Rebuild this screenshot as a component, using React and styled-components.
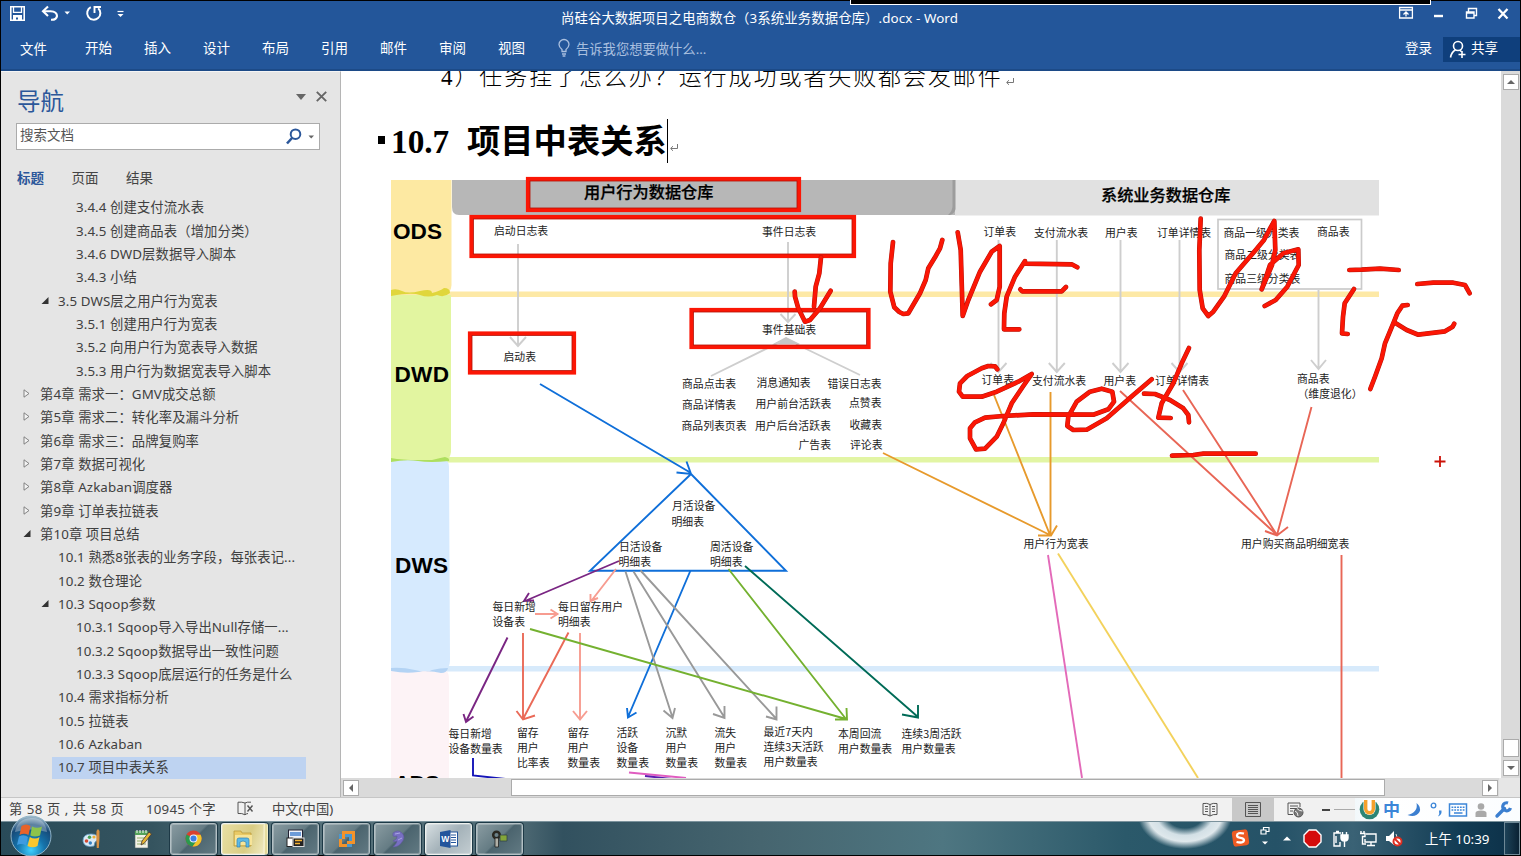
import React from 'react';
import styled, { createGlobalStyle } from 'styled-components';

const UI = `"Noto Sans", "Noto Sans CJK SC", sans-serif`;
const CJK = `"Noto Sans CJK SC", sans-serif`;

const Global = createGlobalStyle`
  * { box-sizing: border-box; }
  body { margin: 0; background: #000; overflow: hidden; font-family: ${UI}; }
  svg { display: block; flex: none; }
`;

const Frame = styled.div`
  position: relative;
  width: 1521px;
  height: 856px;
  padding: 1px;
  background: #000;
  display: flex;
  flex-direction: column;
  overflow: hidden;
`;

/* ---------- title bar and ribbon ---------- */
const Header = styled.header`
  height: 70px;
  flex: none;
  background: #23569a;
  border-bottom: 2px solid #1c4a87;
  color: #fff;
  font-size: 13.5px;
`;
const TitleBar = styled.div`
  height: 35px;
  display: grid;
  grid-template-columns: 200px 1fr 200px;
`;
const QuickTools = styled.div`
  display: flex;
  align-items: flex-start;
  padding: 3px 0 0 8px;
`;
const DocTitle = styled.div`
  text-align: center;
  line-height: 34px;
  white-space: nowrap;
  font-size: 13.4px;
  letter-spacing: 0.08px;
  padding-right: 2px;
`;
const WindowTools = styled.div`
  display: flex;
  justify-content: flex-end;
  padding: 4px 8px 0 0;
`;
const Ribbon = styled.div`
  height: 33px;
  display: flex;
  align-items: flex-start;
`;
const Tabs = styled.nav`
  display: flex;
  padding-left: 19px;
`;
const RibbonTab = styled.span`
  width: ${(p) => p.$w || 59}px;
  line-height: 24px;
  padding-top: ${(p) => (p.$low ? 1 : 0)}px;
`;
const Tell = styled.div`
  flex: 1;
  display: flex;
  gap: 6px;
  color: #a9bfdf;
  line-height: 26px;
  padding-left: 1px;
  font-size: 13.3px;
`;
const SignIn = styled.span`
  line-height: 24px;
  width: 38px;
`;
const Share = styled.div`
  width: 77px;
  height: 25px;
  margin-top: 1px;
  padding-left: 6px;
  display: flex;
  gap: 4px;
  line-height: 23px;
  background: #0f3f7c;
`;
const TopStrip = styled.div`
  position: absolute;
  top: 0;
  left: 850px;
  width: 581px;
  height: 5px;
  background: #000;
  border: 1px solid #fff;
  border-top: 0;
`;

/* ---------- workspace ---------- */
const Body = styled.main`
  height: 726px;
  flex: none;
  display: flex;
`;
const Side = styled.aside`
  width: 340px;
  flex: none;
  background: #e5e5e5;
  border-right: 1px solid #b5b5b5;
  border-top: 1px solid #f5f5f5;
`;
const SideHead = styled.div`
  height: 51px;
  padding: 12px 13px 0 16px;
  display: flex;
  justify-content: space-between;
`;
const SideTitle = styled.h2`
  margin: 0;
  font: 400 23.5px/33px ${CJK};
  color: #2b579a;
`;
const SideTools = styled.div`
  display: flex;
  align-items: center;
  height: 25px;
  gap: 10px;
`;
const Search = styled.div`
  width: 304px;
  height: 27px;
  margin-left: 15px;
  padding: 0 5px 0 3px;
  display: flex;
  align-items: center;
  border: 1px solid #ababab;
  background: #fff;
  color: #555;
  font-size: 13.5px;
`;
const SearchText = styled.span`
  flex: 1;
  line-height: 20px;
  padding-bottom: 3px;
`;
const SideTabs = styled.div`
  display: flex;
  height: 45px;
  padding: 16px 0 0 16px;
  font-size: 13.5px;
  line-height: 24px;
  color: #444;
`;
const SideTab = styled.span`
  width: 54.5px;
  font-weight: ${(p) => (p.$on ? 700 : 400)};
  color: ${(p) => (p.$on ? '#2b579a' : '#444')};
`;
const Item = styled.div`
  display: flex;
  align-items: center;
  height: 23.35px;
  padding-left: ${(p) => 21 + p.$level * 18}px;
  color: #404040;
  font-size: 13.33px;
  letter-spacing: 0.1px;
  white-space: nowrap;
  ${(p) => p.$on && 'background: linear-gradient(#bed3f1, #bed3f1) 51px 2px / 254px 22px no-repeat;'}
`;
const Twist = styled.svg`
  width: 8px;
  height: 9px;
  margin: 0 9px 0 -17px;
`;

const DocPane = styled.section`
  width: 1179px;
  display: flex;
  flex-direction: column;
  background: #fff;
`;
const DocRow = styled.div`
  height: 707px;
  display: flex;
`;
const Paper = styled.article`
  width: 1160px;
  overflow: hidden;
  background: #fff;
`;
const Line = styled.p`
  margin: -9px 0 0;
  height: 31px;
  padding-left: 100px;
  display: flex;
  align-items: center;
  white-space: nowrap;
  font: 300 23px/31px "Liberation Serif", "Noto Sans CJK SC", serif;
  letter-spacing: 1.92px;
  color: #000;
`;
const Heading = styled.h1`
  margin: 0;
  height: 78px;
  padding: 26px 0 0 37px;
  display: flex;
  white-space: nowrap;
  font: 700 33.3px/45px "Liberation Serif", "Noto Sans CJK SC", serif;
  color: #000;
`;
const Bullet = styled.span`
  width: 7px;
  height: 8px;
  margin: 17px 6px 0 0;
  background: #000;
`;
const Num = styled.span`width: 76px;`;
const Caret = styled.span`
  width: 1.5px;
  height: 44px;
  background: #000;
`;
const Mark = styled.svg`
  width: 10px;
  height: 9px;
  margin: ${(p) => p.$m};
`;
const VBar = styled.div`
  width: 19px;
  display: flex;
  flex-direction: column;
  align-items: center;
  background: #dadada;
  padding: 3px 0 2px;
`;
const HBar = styled.div`
  height: 19px;
  display: flex;
  align-items: center;
  padding-left: 2px;
  background: #dadada;
`;
const ScrollBtn = styled.div`
  width: 16px;
  height: 16px;
  border: 1px solid #ababab;
  background: #fff;
  display: grid;
  place-items: center;
`;
const Thumb = styled.div`
  width: ${(p) => p.$w}px;
  height: ${(p) => p.$h}px;
  margin: ${(p) => p.$m};
  border: 1px solid #ababab;
  background: #fff;
`;
const Corner = styled.div`
  width: 21px;
  height: 19px;
  background: #e6e6e6;
  margin-left: auto;
`;
const Diagram = styled.svg`font-family: ${CJK};`;

/* ---------- status bar ---------- */
const Status = styled.footer`
  height: 24px;
  flex: none;
  display: flex;
  align-items: center;
  border-top: 1px solid #c6c6c6;
  background: #f1f1f1;
  color: #444;
  font-size: 13.3px;
  padding-left: 8px;
  white-space: nowrap;
`;
const Stat = styled.span`
  width: ${(p) => p.$w}px;
  padding-bottom: 3px;
  letter-spacing: ${(p) => p.$ls || 0}px;
`;
const ViewCell = styled.span`
  width: 42.5px;
  height: 23px;
  display: grid;
  place-items: center;
  background: ${(p) => (p.$on ? '#c8c8c8' : 'transparent')};
`;
const Zoomer = styled.span`
  display: flex;
  align-items: center;
  flex: 1;
  padding-left: 5px;
  gap: 4px;
`;
const Minus = styled.i`width: 8px; height: 2px; background: #444;`;
const Rail = styled.i`flex: 1; height: 1px; background: #aaa;`;
const Ime = styled.div`
  width: 165px;
  height: 23px;
  padding-left: 4px;
  display: flex;
  align-items: center;
  background: linear-gradient(90deg, #f2f8fb, #fff 20%, #fbfdff);
  color: #3c86d8;
`;
const ImeWord = styled.b`
  font-size: 17px;
  line-height: 22px;
  width: 24px;
  padding-left: 3px;
`;

/* ---------- taskbar ---------- */
const Taskbar = styled.div`
  position: relative;
  height: 34px;
  flex: none;
  display: flex;
  align-items: center;
  border-top: 1px solid #7b929c;
  background:
    radial-gradient(ellipse 47px 34px at 1184px -7px, transparent 38%, #d3e0e6 60%, #dfe8ec 78%, transparent 100%),
    linear-gradient(90deg, #294b59 0, #35545f 10%, #56717a 17%, #506b75 34%, #32515f 37%, #46656f 50%, #4e7681 62%, #2b596a 74%, #255267 84%, #3a6275 89%, #123c54 96%, #0c3048 100%);
`;
const Orb = styled.div`
  position: absolute;
  left: 9px;
  top: -7px;
  width: 42px;
  height: 42px;
`;
const Pinned = styled.div`
  display: flex;
  width: 169px;
  padding-left: 81px;
  gap: 31px;
`;
const Task = styled.div`
  width: 47px;
  height: 32px;
  margin-right: 4px;
  display: grid;
  place-items: center;
  border: 1px solid ${(p) => (p.$kind === 'plain' ? '#b3c0c4' : '#eef1ee')};
  border-radius: 3px;
  box-shadow: inset 0 0 0 1px rgba(255,255,255,.25), 0 0 0 1px #1d3946;
  background: ${(p) =>
    p.$kind === 'folder'
      ? 'linear-gradient(110deg, #e8dfa4, #d9cd84 60%, #f0eac2)'
      : p.$kind === 'active'
      ? 'linear-gradient(135deg, #d7dfe2, #a4b2b9 50%, #c3cdd1)'
      : 'linear-gradient(135deg, #8a9ca2 0, #657c84 48%, #4b646e 52%, #627a83 100%)'};
  ${(p) => p.$kind === 'folder' && 'border-right: 4px double #f5efc5;'}
`;
const Tray = styled.div`
  margin-left: auto;
  display: flex;
  align-items: center;
  color: #fff;
`;
const TrayIcon = styled.span`
  width: ${(p) => p.$w}px;
  display: grid;
  place-items: center;
`;
const Clock = styled.span`
  width: 98px;
  padding-left: 19px;
  font-size: 13.4px;
  line-height: 30px;
  white-space: nowrap;
`;
const Peek = styled.span`
  width: 16px;
  height: 33px;
  border: 1px solid #6e8896;
  background: linear-gradient(90deg, #1d4258, #0a2234);
`;

const toc = [
  [3, '3.4.4 创建支付流水表'],
  [3, '3.4.5 创建商品表（增加分类）'],
  [3, '3.4.6 DWD层数据导入脚本'],
  [3, '3.4.3 小结'],
  [2, '3.5 DWS层之用户行为宽表', 'open'],
  [3, '3.5.1 创建用户行为宽表'],
  [3, '3.5.2 向用户行为宽表导入数据'],
  [3, '3.5.3 用户行为数据宽表导入脚本'],
  [1, '第4章 需求一：GMV成交总额', 'shut'],
  [1, '第5章 需求二：转化率及漏斗分析', 'shut'],
  [1, '第6章 需求三：品牌复购率', 'shut'],
  [1, '第7章 数据可视化', 'shut'],
  [1, '第8章 Azkaban调度器', 'shut'],
  [1, '第9章 订单表拉链表', 'shut'],
  [1, '第10章 项目总结', 'open'],
  [2, '10.1 熟悉8张表的业务字段，每张表记...'],
  [2, '10.2 数仓理论'],
  [2, '10.3 Sqoop参数', 'open'],
  [3, '10.3.1 Sqoop导入导出Null存储一...'],
  [3, '10.3.2 Sqoop数据导出一致性问题'],
  [3, '10.3.3 Sqoop底层运行的任务是什么'],
  [2, '10.4 需求指标分析'],
  [2, '10.5 拉链表'],
  [2, '10.6 Azkaban'],
  [2, '10.7 项目中表关系'],
];

const labels = [
  [494, 231, '启动日志表'], [762, 232, '事件日志表'], [762, 330, '事件基础表'], [503.5, 357, '启动表'],
  [682, 384, '商品点击表'], [756.5, 382.5, '消息通知表'], [827.5, 383.5, '错误日志表'],
  [682, 405, '商品详情表'], [755.5, 404, '用户前台活跃表'], [849, 403, '点赞表'],
  [681.5, 426, '商品列表页表'], [755, 426, '用户后台活跃表'], [849.5, 424.5, '收藏表'],
  [798.5, 444.5, '广告表'], [850, 444.5, '评论表'],
  [983.5, 232, '订单表'], [1034, 232.5, '支付流水表'], [1105, 232.5, '用户表'], [1157, 232.5, '订单详情表'],
  [1223.5, 232.5, '商品一级分类表'], [1317, 232, '商品表'], [1224.5, 255, '商品二级分类表'], [1224.5, 278.5, '商品三级分类表'],
  [981.5, 380, '订单表'], [1032, 380.5, '支付流水表'], [1103.5, 380.5, '用户表'], [1155, 380.5, '订单详情表'],
  [1297, 378.5, '商品表'], [1297.5, 393.5, '（维度退化）'],
  [672, 506, '月活设备'], [671.5, 521.5, '明细表'], [619, 547, '日活设备'], [618.5, 562, '明细表'],
  [710, 547, '周活设备'], [710, 562, '明细表'],
  [492.5, 606.5, '每日新增'], [492.5, 622, '设备表'], [558, 606.5, '每日留存用户'], [558, 621.5, '明细表'],
  [448.5, 733.5, '每日新增'], [448.5, 748.5, '设备数量表'],
  [517, 732.5, '留存'], [517, 747.5, '用户'], [517, 763, '比率表'],
  [567.5, 732.5, '留存'], [567.5, 747.5, '用户'], [567.5, 763, '数量表'],
  [616.5, 732.5, '活跃'], [616.5, 747.5, '设备'], [616.5, 763, '数量表'],
  [665.5, 732.5, '沉默'], [665.5, 747.5, '用户'], [665.5, 763, '数量表'],
  [714.5, 732.5, '流失'], [714.5, 747.5, '用户'], [714.5, 763, '数量表'],
  [763.5, 731.5, '最近7天内'], [763.5, 747, '连续3天活跃'], [763.5, 762, '用户数量表'],
  [838, 733.5, '本周回流'], [838, 748.5, '用户数量表'],
  [901.5, 733.5, '连续3周活跃'], [901.5, 748.5, '用户数量表'],
  [1023.5, 544, '用户行为宽表'], [1241, 544, '用户购买商品明细宽表'],
];

const down = (x, a, b, w = 8, h = 9) => `M${x} ${a}V${b}M${x - w} ${b - h}L${x} ${b}L${x + w} ${b - h}`;
const lines = [
  ['#cecece', down(518, 244, 346)],
  ['#cecece', down(788, 242, 322, 7.5, 8)],
  ['#cecece', 'M711 376L780 342M860 375L796 344'],
  ['#cecece', down(998.5, 240, 372)], ['#cecece', down(1056.8, 240, 372)],
  ['#cecece', down(1120.5, 240, 372)], ['#cecece', down(1179.5, 240, 372)],
  ['#cecece', down(1318.5, 290, 369, 7.5)],
  ['#0f6fd9', 'M540 384L691 473M686.5 461.5L691 474L676.5 472.5M691 474L590 570.8H786L691 474'],
  ['#f79c90', 'M616 569L592 600M590.5 594V601L598 598M535 614H557M550.5 609.5L557.5 614L550.5 618.5'],
  ['#7a2683', 'M619 561L525 601M529 593L524 601L534 600.5M507.5 637.5L466 721.5M463.5 714L466 722L473.5 716.5'],
  ['#ea6a58', 'M523 633V719M568.5 632.5L523 719M516.5 711L523 719.5L535 715.5'],
  ['#f79c90', 'M580 633V719M573 711L580 719.5L587 711'],
  ['#0f6fd9', 'M690.5 570.5L628 717M627 708L628 717.5L636.5 712.5'],
  ['#999', 'M625.5 571.5L672.5 717.5M663.5 710.5L672.5 718L675 708M633.5 571.5L724.5 717.5M713 714L724.5 718V706M640.5 570.5L776.5 719M766 716.5L776.5 719.5V706.5'],
  ['#74b130', 'M530 629L846 719M728.5 569L846 719M835 719.5H847L846.5 708'],
  ['#006b57', 'M745 566L918 717M902 714.5L918 717.5V705'],
  ['#e79a2c', 'M883 453L1050 535M994 395L1050 535M1050.5 392V535M1038 535.5H1051L1057 525.5'],
  ['#e36ab9', 'M1048 555L1082 778'],
  ['#f3d25c', 'M1058 553.5L1198 778'],
  ['#e86656', 'M1120 391L1277 535M1183 390L1277 535M1311.5 407L1277 535M1265 531L1277 535.5L1288 527M1341.5 555V778'],
  ['#1515b8', 'M473 758V775.5L506 779'],
  ['#e05cc0', 'M629 772.5L686 778'],
  ['#5a1cb0', 'M645 776L672 779'],
];

const inks = [
  [860, '99,216 92,280 91,365 103,412 118,426 130,432 145,430 180,370 197,330 205,295 225,262 240,235 247,210'],
  [860, '293,187 302,240 308,438 325,390 360,305 395,245 419,228 419,350 410,390 393,403'],
  [860, '652,292 635,283 495,281 495,273 465,320 440,380 433,430 432,478 478,478'],
  [860, '481,358 487,364 605,364 618,351'],
  [860, '1022,146 1018,240 1019,360 1028,415 1045,438 1060,425 1092,380 1127,310 1187,240 1212,210 1232,172 1243,153 1246,240 1236,285 1205,358 1215,330 1230,285 1270,250 1315,238 1316,285 1282,350 1247,390 1214,408'],
  [1180, '508,300 545,299 600,296 656,300'],
  [1180, '522,357 494,400 489,440 486,490 503,492'],
  [1180, '712,342 760,338 820,338 855,345 869,370'],
  [1180, '683,405 667,407 652,430 640,460 615,520 605,565 585,620 571,657'],
  [1180, '645,458 680,480 715,494 795,484 818,470 823,461'],
  [860, '412,598 405,589 385,588 365,595 322,618 300,640 297,665 308,680 365,680 410,665 475,635 515,612 490,648 455,700 430,760 410,800 375,836 348,838 330,805 330,775 345,757 375,743 430,738 520,733 700,734 745,718 762,695 757,665 725,656 690,665 650,695 625,740 622,768 640,780 680,779 740,745 820,675 875,628'],
  [860, '987,534 965,580 940,640 905,700 895,743 932,744'],
  [860, '852,671 885,672 930,690 970,715 985,735 987,757'],
  [860, '936,857 1000,855 1030,851 1187,851'],
  [380, '1323,262 1318,310 1307,350 1302,410'],
  [380, '1244,365 1245,380 1255,415 1275,455 1290,450 1320,415 1352,362'],
].map(([ox, s]) => s.split(' ').map((p) => {
  const [x, y] = p.split(',').map(Number);
  return `${(ox + x / 3).toFixed(1)},${(170 + y / 3).toFixed(1)}`;
}).join(' '));

const frames = [[526, 177, 275, 35], [469.5, 215, 386.5, 43], [468, 331.5, 108, 43], [689.5, 308, 181, 41]];

function Warehouse() {
  return (
    <Diagram width="1160" height="607" viewBox="341 171 1160 607">
      <path fill="#b7b7b7" d="M452 180H955V215H459Q452 215 452 207Z" />
      <path fill="#e1e1e1" d="M955 180H1379V215.5H955Z" />
      <path fill="#9c9c9c" d="M952.5 180H955.5V209Q955 213 950 215H948Q952.5 211 952.5 206Z" />
      <path fill="#fde9a6" d="M391 291.5H1379V297H391Z" />
      <path fill="#e2f5a4" d="M391 457H1379V462.5H391Z" />
      <path fill="#d7eafb" d="M391 666H1379V671.5H391Z" />
      <path fill="#fde9a2" d="M391 180H451.5V285Q451 292 447 293H391Z" />
      <path fill="#e2f5a0" d="M391 295H451V452Q450 459 446 460H391Z" />
      <path fill="#d6eafe" d="M391 460H445Q449 461 449 467L450 660Q450 669 443 671H391Z" />
      <path fill="#fdf3f6" d="M391 671H446Q449 672 449 680V778H391Z" />
      <path fill="#e0d63c" d="M391 290Q396 288 402 291T420 291T432 293Q440 291 444 288Q450 288 450 293Q444 298 437 295Q428 298 420 295T391 296Z" />
      <path fill="#aedf5e" d="M391 458Q402 460 418 460T432 460Q440 458 445 457Q450 458 449 461Q430 463 418 461T391 462Z" />
      <path fill="#b3d3f4" d="M391 668Q402 667 415 670T432 670Q440 668 448 668Q447 673 441 673Q430 670 418 672T391 671Z" />
      <g fontFamily="Liberation Sans, sans-serif" fontWeight="700" fontSize="22.6" fill="#000">
        <text x="393" y="239" textLength="49">ODS</text>
        <text x="394.5" y="382" textLength="54.5">DWD</text>
        <text x="395" y="573" textLength="53">DWS</text>
        <text x="394" y="790.5" textLength="46">ADS</text>
      </g>
      <g fontWeight="500" fontSize="16.2" fill="#000" stroke="#000" strokeWidth=".25">
        <text x="584" y="198">用户行为数据仓库</text>
        <text x="1101" y="200.5">系统业务数据仓库</text>
      </g>
      <rect x="1218" y="219.5" width="143.5" height="69.5" fill="none" stroke="#cbcbcb" strokeWidth="1.7" />
      <path d="M786 337L773 344H800Z" fill="#c6c6c6" />
      {lines.map(([c, d], i) => <path key={i} d={d} stroke={c} strokeWidth="1.9" fill="none" />)}
      <g fontSize="10.83" fill="#222">
        {labels.map(([x, y, t], i) => <text key={i} x={x} y={y + 4}>{t}</text>)}
      </g>
      <g fill="none" stroke="#fb1605" strokeWidth="4.2">
        {frames.map(([x, y, w, h], i) => <rect key={i} x={x + 2} y={y + 2} width={w - 4} height={h - 4} />)}
      </g>
      <g fill="none" stroke="#a81208" strokeWidth="0.7">
        {frames.map(([x, y, w, h], i) => <rect key={i} x={x + 4} y={y + 4} width={w - 8} height={h - 8} />)}
      </g>
      <g fill="none" strokeLinejoin="round" strokeLinecap="round">
        {inks.map((p, i) => <polyline key={i} points={p} stroke="#b5150a" strokeWidth="4.7" />)}
        {inks.map((p, i) => <polyline key={i} points={p} stroke="#fb1605" strokeWidth="3.7" />)}
      </g>
      <path d="M1434.5 461.5H1445.5M1440 456V467" stroke="#cc1208" strokeWidth="1.8" />
    </Diagram>
  );
}

const Return = ({ m }) => (
  <Mark $m={m} viewBox="0 0 10 9"><path d="M8.5 1V5.5H2M4 3.2L1.6 5.5L4 7.8" fill="none" stroke="#777" /></Mark>
);
const Arrow = ({ d }) => <svg width="8" height="8" viewBox="0 0 8 8"><path d={d} fill="#666" /></svg>;

const QuickIcons = () => (
  <svg width="120" height="20" viewBox="0 0 120 20" fill="none" stroke="#fff">
    <path d="M1.8 2.8H15.2V16.2H1.8Z" strokeWidth="1.6" />
    <path d="M4.5 3V8.3H12.5V3" strokeWidth="1.3" />
    <path d="M4 11H13V16.5H9V13.5H7V16.5H4Z" fill="#fff" stroke="none" />
    <path d="M34.5 7.2H41.5Q48 7.5 48 12Q47.5 16 42 15.8" strokeWidth="2.1" />
    <path d="M39 2.4L34 7.2L39 12" strokeWidth="2.1" />
    <path d="M55.5 7.5H61L58.2 10.5Z" fill="#fff" stroke="none" />
    <path d="M81.8 3.2A6.6 6.6 0 1 0 89.2 4.2" strokeWidth="2" />
    <path d="M85.5 9V3H92" strokeWidth="1.9" />
    <path d="M108.5 7.5H114.5" strokeWidth="1.2" />
    <path d="M108.5 10H114.5L111.5 13Z" fill="#fff" stroke="none" />
  </svg>
);
const WindowIcons = () => (
  <svg width="115" height="20" viewBox="0 0 115 20" fill="none" stroke="#fff">
    <path d="M2.6 2.5H15.4V13H2.6ZM2.6 5H15.4M9 11.5V7.5M6.5 9.5L9 7L11.5 9.5" strokeWidth="1.3" />
    <path d="M37 11H46" strokeWidth="2.4" />
    <path d="M69.5 7H77V13H69.5ZM71.5 7V3.5H79.5V10.5H77M69.5 8H77" strokeWidth="1.4" />
    <path d="M101.5 4L110.5 13.5M110.5 4L101.5 13.5" strokeWidth="2.3" />
  </svg>
);

export default function App() {
  return (
    <Frame>
      <Global />
      <Header>
        <TitleBar>
          <QuickTools><QuickIcons /></QuickTools>
          <DocTitle>尚硅谷大数据项目之电商数仓（3系统业务数据仓库）.docx - Word</DocTitle>
          <WindowTools><WindowIcons /></WindowTools>
        </TitleBar>
        <Ribbon>
          <Tabs>
            <RibbonTab $w={65} $low>文件</RibbonTab>
            {['开始', '插入', '设计', '布局', '引用', '邮件', '审阅', '视图'].map((t) => <RibbonTab key={t}>{t}</RibbonTab>)}
          </Tabs>
          <Tell>
            <svg width="12" height="24" viewBox="0 0 12 24" fill="none" stroke="#a9bfdf" strokeWidth="1.3">
              <path d="M4 15.5V13.5Q1 11 1 8.5A5 5 0 0 1 11 8.5Q11 11 8 13.5V15.5ZM4 18H8M4.6 20H7.4" />
            </svg>
            告诉我您想要做什么...
          </Tell>
          <SignIn>登录</SignIn>
          <Share>
            <svg width="18" height="25" viewBox="0 0 18 25" fill="none" stroke="#fff" strokeWidth="1.6">
              <circle cx="9" cy="9" r="4.5" /><path d="M1.5 20.5Q2.5 15 6.5 13M11 13L12 14.5M9.5 17.5H16.5M13 14V21" />
            </svg>
            共享
          </Share>
        </Ribbon>
      </Header>
      <TopStrip />

      <Body>
        <Side>
          <SideHead>
            <SideTitle>导航</SideTitle>
            <SideTools>
              <svg width="10" height="6" viewBox="0 0 10 6"><path d="M0 0H10L5 6Z" fill="#666" /></svg>
              <svg width="11" height="11" viewBox="0 0 11 11"><path d="M.8.8L10.2 10.2M10.2.8L.8 10.2" stroke="#666" strokeWidth="1.9" /></svg>
            </SideTools>
          </SideHead>
          <Search>
            <SearchText>搜索文档</SearchText>
            <svg width="28" height="18" viewBox="0 0 28 18">
              <circle cx="9.5" cy="6.2" r="4.8" fill="none" stroke="#2b579a" strokeWidth="2" />
              <path d="M6 10L1 15.5" stroke="#2b579a" strokeWidth="2.6" />
              <path d="M22.5 7.5H28L25.2 10.5Z" fill="#666" />
            </svg>
          </Search>
          <SideTabs>
            <SideTab $on>标题</SideTab><SideTab>页面</SideTab><SideTab>结果</SideTab>
          </SideTabs>
          {toc.map(([level, text, twist]) => (
            <Item key={text} $level={level} $on={text.startsWith('10.7')}>
              {twist && (
                <Twist viewBox="0 0 8 9">
                  {twist === 'open'
                    ? <path d="M7.5 1V8H.5Z" fill="#333" />
                    : <path d="M1 .8L6 4.5L1 8.2Z" fill="#f4f4f4" stroke="#777" strokeWidth=".9" />}
                </Twist>
              )}
              {text}
            </Item>
          ))}
        </Side>

        <DocPane>
          <DocRow>
            <Paper>
              <Line>4）任务挂了怎么办？运行成功或者失败都会发邮件<Return m="7px 0 0 2px" /></Line>
              <Heading>
                <Bullet /><Num>10.7</Num>项目中表关系<Caret /><Return m="24px 0 0 1px" />
              </Heading>
              <Warehouse />
            </Paper>
            <VBar>
              <ScrollBtn><Arrow d="M0 6H8L4 2Z" /></ScrollBtn>
              <Thumb $w={16} $h={18} $m="auto 0 3px" />
              <ScrollBtn><Arrow d="M0 2H8L4 6Z" /></ScrollBtn>
            </VBar>
          </DocRow>
          <HBar>
            <ScrollBtn><Arrow d="M6 0V8L2 4Z" /></ScrollBtn>
            <Thumb $w={874} $h={17} $m="0 97px 0 152px" />
            <ScrollBtn><Arrow d="M2 0V8L6 4Z" /></ScrollBtn>
            <Corner />
          </HBar>
        </DocPane>
      </Body>

      <Status>
        <Stat $w={137} $ls={0.5}>第 58 页 , 共 58 页</Stat>
        <Stat $w={91} $ls={0.2}>10945 个字</Stat>
        <Stat $w={35}>
          <svg width="18" height="15" viewBox="0 0 18 15" fill="none" stroke="#555">
            <path d="M8 2Q5 .8 1 1.2V12.5Q5 12 8 13.8ZM8 2Q10 .8 14 1.2M8 13.8Q9 12.8 11 12.5" />
            <path d="M10.5 4.5L15.5 10.5M15.5 4.5L10.5 10.5" strokeWidth="1.4" />
          </svg>
        </Stat>
        <Stat $w={917}>中文(中国)</Stat>
        <ViewCell>
          <svg width="16" height="15" viewBox="0 0 16 15" fill="none" stroke="#555">
            <path d="M8 2.5Q5 .8 1 1.5V12.5Q5 12 8 14Q11 12 15 12.5V1.5Q11 .8 8 2.5V14M3 4.5H6M3 7H6M3 9.5H6M10 4.5H13M10 7H13M10 9.5H13" />
          </svg>
        </ViewCell>
        <ViewCell $on>
          <svg width="16" height="15" viewBox="0 0 16 15" fill="none" stroke="#555">
            <path d="M.5.5H15.5V14.5H.5ZM3 3.5H13M3 5.5H13M3 7.5H13M3 9.5H13M3 11.5H13" />
          </svg>
        </ViewCell>
        <ViewCell>
          <svg width="17" height="16" viewBox="0 0 17 16" fill="none" stroke="#555">
            <path d="M6 12.5H1V1H13V5M3 4H11M3 6.5H9M3 9H6" />
            <circle cx="11.5" cy="10.5" r="4.5" fill="#777" /><path d="M8 9Q11 10 11 14M10 6.5Q12 9 15.5 9" stroke="#eee" />
          </svg>
        </ViewCell>
        <Zoomer><Minus /><Rail /></Zoomer>
        <Ime>
          <svg width="21" height="21" viewBox="0 0 21 21">
            <circle cx="10.5" cy="10.5" r="9.8" fill="#2d8574" />
            <path d="M4.5 0V10A6 6 0 0 0 16.5 10V0Z" fill="#fff" />
            <path d="M6.7 1V10A3.8 3.8 0 0 0 14.3 10V1" fill="none" stroke="#f5a12c" strokeWidth="3.4" />
          </svg>
          <ImeWord>中</ImeWord>
          <svg width="109" height="20" viewBox="1404.5 0 109 20">
            <path d="M1417 3Q1422 7 1420 12Q1416 18 1408 15Q1419 12 1417 3Z" fill="#3c7fd0" />
            <circle cx="1434" cy="5.5" r="2.3" fill="none" stroke="#3c86d8" strokeWidth="1.3" />
            <path d="M1439.5 10.5H1442Q1442.5 15 1438.5 16.5Q1440.5 14 1439.5 10.5Z" fill="#3c86d8" />
            <rect x="1450" y="4" width="17" height="12" fill="#fff" stroke="#3c86d8" strokeWidth="1.5" />
            <path d="M1452 7.2H1465.5M1452 10H1465.5" stroke="#3c86d8" strokeWidth="1.5" strokeDasharray="1.8 1" /><path d="M1454.5 13H1463" stroke="#3c86d8" strokeWidth="1.5" />
            <circle cx="1481.5" cy="6.5" r="3.3" fill="#a9a9a9" /><path d="M1476 17V13Q1476 10.5 1481.5 10.5T1487 13V17Z" fill="#a9a9a9" />
            <path d="M1497.5 16L1505 8.5" stroke="#3c7fd0" strokeWidth="3.4" strokeLinecap="round" /><path d="M1508.5 3A4 4 0 1 0 1511 8" fill="none" stroke="#3c7fd0" strokeWidth="3.2" />
          </svg>
        </Ime>
      </Status>

      <Taskbar>
        <Orb>
          <svg width="42" height="42" viewBox="0 0 42 42">
            <defs>
              <radialGradient id="orb" cx=".5" cy=".85" r=".85">
                <stop offset="0" stopColor="#3fd0ff" /><stop offset=".4" stopColor="#1573ab" /><stop offset=".75" stopColor="#174a78" /><stop offset="1" stopColor="#a9c3d2" />
              </radialGradient>
            </defs>
            <circle cx="21" cy="21" r="20" fill="url(#orb)" stroke="#8fb2c6" />
            <path d="M5 17Q7 4 21 3T37 17Q21 12 5 17Z" fill="#fff" opacity=".3" />
            <path d="M11.5 11Q16 8 20.5 11L18.5 20Q14 17.5 9.5 20Z" fill="#e8632a" />
            <path d="M22 11.5Q27 14 32 11.5L30 20.5Q25 22.5 20.3 20.5Z" fill="#8dc44a" />
            <path d="M9 21.5Q14 19 18 22L16 30.5Q11.5 28 7 30Z" fill="#3e9be0" />
            <path d="M19.8 22Q25 25 29.5 22L27.5 31Q23 33.5 17.5 31Z" fill="#fac72e" />
          </svg>
        </Orb>
        <Pinned>
          <svg width="20" height="20" viewBox="0 0 20 20">
            <path d="M1 12Q1 5 9 5T16 11Q12 12 12 17Q2 19 1 12Z" fill="#dceaf5" stroke="#6ba3cc" strokeWidth=".8" />
            <circle cx="4.5" cy="12" r="1.8" fill="#d44a32" /><circle cx="7.5" cy="8.3" r="1.7" fill="#45a055" /><circle cx="12" cy="8" r="1.6" fill="#eead34" /><circle cx="8.3" cy="14" r="1.7" fill="#347fc2" />
            <path d="M14.5 2L16 0L17.5 2V9L16.8 19H14.8L14.3 9Z" fill="#da9143" />
          </svg>
          <svg width="20" height="20" viewBox="0 0 20 20">
            <path d="M2 2H15V19H2Z" fill="#f4f3e8" stroke="#566" strokeWidth=".6" /><path d="M2 2H15V6H2Z" fill="#55a35a" />
            <path d="M4 1V4M7 1V4M10 1V4M13 1V4" stroke="#fff" /><path d="M4 9H12M4 12H10M4 15H13" stroke="#93ae69" />
            <path d="M8 16L9 12L16 3L18.5 5L11.5 14Z" fill="#e5b533" stroke="#433" strokeWidth=".8" />
          </svg>
        </Pinned>
        <Task $kind="plain">
          <svg width="17" height="17" viewBox="0 0 18 18">
            <circle cx="9" cy="9" r="8.5" fill="#d9402f" /><path d="M9 9L1.7 4.8A8.5 8.5 0 0 0 8 17.5L13 11Z" fill="#2b9a4d" /><path d="M9 5H16.5A8.5 8.5 0 0 1 8 17.5L12.5 11Z" fill="#f2c52b" /><circle cx="9" cy="9" r="4.2" fill="#eef" /><circle cx="9" cy="9" r="3.2" fill="#3c7fe4" />
          </svg>
        </Task>
        <Task $kind="folder">
          <svg width="20" height="19" viewBox="0 0 20 19">
            <path d="M1 2H8L9 4H18V17H1Z" fill="#e9ca66" stroke="#b79635" strokeWidth=".7" /><path d="M2 6H19V16H2Z" fill="#f7e498" /><path d="M4 18V11Q4 9 6 9H14Q16 9 16 11V18H13V13Q10 11 7 13V18Z" fill="#5cb9e6" stroke="#2f83b4" strokeWidth=".7" />
          </svg>
        </Task>
        <Task $kind="plain">
          <svg width="19" height="19" viewBox="0 0 19 19">
            <rect x="2.5" y="1" width="14" height="11" fill="#eef2fa" stroke="#223" /><path d="M4 3H15V7H4Z" fill="#6c9bd8" /><rect x="1" y="9" width="6" height="8.5" fill="#fff" stroke="#222" /><rect x="7" y="9" width="11" height="8.5" fill="#222" stroke="#ddd" /><path d="M9 11.5H16M9 14.5H14" stroke="#f5b434" strokeWidth="1.6" />
          </svg>
        </Task>
        <Task $kind="plain">
          <svg width="18" height="18" viewBox="0 0 18 18" fill="none">
            <rect x="2.5" y="5.5" width="10" height="10" stroke="#4a97cf" strokeWidth="3" />
            <path d="M5.5 9V2.5H15.5V12.5H9" stroke="#f3932b" strokeWidth="3" />
            <path d="M2.5 9V15.5H9" stroke="#f3932b" strokeWidth="3" />
          </svg>
        </Task>
        <Task $kind="plain">
          <svg width="18" height="20" viewBox="0 0 18 20">
            <path d="M4 4Q9 0 13 4Q17 8 13 13Q10 18 4 18Q8 14 8 12Q6 13 4 12Q9 10 8 7Q6 8 4 7Z" fill="#776fc2" stroke="#5f599d" strokeWidth=".6" /><path d="M6 5L11 4M9 11L13 9" stroke="#a9a4e4" />
          </svg>
        </Task>
        <Task $kind="active">
          <svg width="18" height="18" viewBox="0 0 18 18">
            <rect x="7" y="2" width="10.5" height="14" fill="#fff" stroke="#24569c" /><path d="M11 5H16M11 7.5H16M11 10H16M11 12.5H16" stroke="#24569c" /><path d="M0 2L10.5 0V18L0 16Z" fill="#23559c" /><text x="1.2" y="12" fontFamily="Liberation Sans, sans-serif" fontWeight="700" fontSize="8.5" fill="#fff">W</text>
          </svg>
        </Task>
        <Task $kind="plain">
          <svg width="18" height="18" viewBox="0 0 18 18">
            <circle cx="5.5" cy="5" r="3.3" fill="none" stroke="#292822" strokeWidth="2.5" /><path d="M4 8H7.5V17H4Z" fill="#b1b1a8" stroke="#222" strokeWidth=".8" /><path d="M9 5H16V11H9Z" fill="#83a63a" stroke="#344" strokeWidth=".8" />
          </svg>
        </Task>
        <Tray>
          <TrayIcon $w={26}>
            <svg width="19" height="20" viewBox="0 0 19 20">
              <rect x="1.5" y="1" width="16" height="16" rx="3" fill="#ee5a22" transform="rotate(-8 9.5 9)" /><path d="M13 4.5Q6 3 6 6.5Q6 8.5 9.5 8.8T13 11.5Q12.5 14.5 5.5 13" fill="none" stroke="#fff" strokeWidth="2.3" />
            </svg>
          </TrayIcon>
          <TrayIcon $w={23}>
            <svg width="10" height="26" viewBox="0 0 10 26" fill="none" stroke="#fff"><path d="M1 4H6V8H1ZM3.5 4V1.5H9V5.5H6" strokeWidth="1.2" /><path d="M2 15.5H8L5 18.5Z" fill="#fff" stroke="none" /></svg>
          </TrayIcon>
          <TrayIcon $w={22}><svg width="8" height="5" viewBox="0 0 8 5"><path d="M0 4.5H8L4 .5Z" fill="#fff" /></svg></TrayIcon>
          <TrayIcon $w={29}>
            <svg width="19" height="19" viewBox="0 0 19 19"><path d="M6 1H13L18 6V13L13 18H6L1 13V6Z" fill="#d40c0c" stroke="#fff" strokeWidth="1.4" /></svg>
          </TrayIcon>
          <TrayIcon $w={26}>
            <svg width="17" height="18" viewBox="0 0 17 18" fill="none" stroke="#fff" strokeWidth="1.4"><path d="M9 3H2V16H8V12M4 1.5H7M4 6V13" /><path d="M9 5H16V8Q16 11 12.5 11T9 8ZM10.5 5V2M14.5 5V2M12.5 11V17" fill="#fff" /></svg>
          </TrayIcon>
          <TrayIcon $w={29}>
            <svg width="18" height="17" viewBox="0 0 18 17" fill="none" stroke="#fff" strokeWidth="1.4"><path d="M7 4H17V12H6V9M12 12V15M8 15.5H16M2 1V3M5 1V3M1 3.5H6V6.5H3.5V14H7" /></svg>
          </TrayIcon>
          <TrayIcon $w={24}>
            <svg width="18" height="17" viewBox="0 0 18 17"><path d="M1 6H4L9 1V15L4 11H1Z" fill="#fff" /><path d="M11 4Q13 7 11 10" stroke="#ddd" fill="none" /><circle cx="12.5" cy="11.5" r="4" fill="#fff" stroke="#df2e20" strokeWidth="2" /><path d="M10 9L15 14" stroke="#df2e20" strokeWidth="2" /></svg>
          </TrayIcon>
          <Clock>上午 10:39</Clock>
          <Peek />
        </Tray>
      </Taskbar>
    </Frame>
  );
}
